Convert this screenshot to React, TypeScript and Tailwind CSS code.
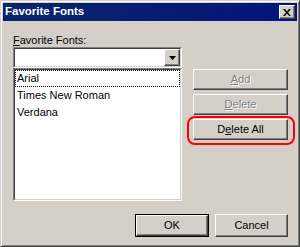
import React from 'react';

const font = { fontFamily: '"Liberation Sans", Arial, sans-serif' };

function Btn({
  children,
  disabled,
  className = '',
}: {
  children: React.ReactNode;
  disabled?: boolean;
  className?: string;
}) {
  return (
    <div
      className={`flex items-center justify-center border border-t-white border-l-white border-r-[#404040] border-b-[#404040] bg-[#d4d0c8] text-[11px] shadow-[inset_-1px_-1px_0_#808080] ${
        disabled ? 'text-[#808080] [text-shadow:1px_1px_0_#fff]' : 'text-black'
      } ${className}`}
    >
      {children}
    </div>
  );
}

function Sunken({ className = '', children }: { className?: string; children?: React.ReactNode }) {
  return (
    <div className={`border border-t-[#808080] border-l-[#808080] border-r-white border-b-white ${className}`}>
      <div className="h-full border border-t-[#404040] border-l-[#404040] border-r-[#d4d0c8] border-b-[#d4d0c8] bg-white">
        {children}
      </div>
    </div>
  );
}

export default function App() {
  const fonts = ['Arial', 'Times New Roman', 'Verdana'];

  return (
    <div
      className="w-[300px] h-[247px] bg-[#d4d0c8] border border-t-[#d4d0c8] border-l-[#d4d0c8] border-r-[#404040] border-b-[#404040] shadow-[inset_1px_1px_0_#fff,inset_-1px_-1px_0_#808080] p-[2px] flex flex-col"
      style={font}
    >
      {/* title bar */}
      <div className="h-[18px] bg-gradient-to-r from-[#0a246a] to-[#04147c] flex items-center justify-between pl-[2px] pr-[2px]">
        <span className="text-white font-bold text-[11.5px] leading-none">Favorite Fonts</span>
        <Btn className="w-[16px] h-[14px]">
          <svg width="8" height="7" viewBox="0 0 8 7">
            <path d="M0 0h2l2 2.5L6 0h2L5 3.5 8 7H6L4 4.5 2 7H0l3-3.5z" fill="#000" />
          </svg>
        </Btn>
      </div>

      <div className="flex-1 flex flex-col pl-[10px] pr-[9px] pt-[12px]">
        <div className="flex gap-[11px]">
          <div className="w-[169px] flex flex-col">
            <div className="h-[14px] text-[11px] leading-[14px] text-black">
              <span className="underline">F</span>avorite Fonts:
            </div>
            <Sunken className="h-[21px]">
              <div className="h-full flex justify-end">
                <Btn className="w-[16px] h-full">
                  <svg width="7" height="4" viewBox="0 0 7 4">
                    <path d="M0 0h7L3.5 4z" fill="#000" />
                  </svg>
                </Btn>
              </div>
            </Sunken>
            <Sunken className="h-[133px]">
              <div className="flex flex-col">
                {fonts.map((f, i) => (
                  <div
                    key={f}
                    className={`h-[17px] flex items-center pl-[1px] text-[11px] text-black border ${
                      i === 0 ? 'border-dotted border-black' : 'border-transparent'
                    }`}
                  >
                    {f}
                  </div>
                ))}
              </div>
            </Sunken>
          </div>

          <div className="flex flex-col gap-[4px] pt-[36px]">
            <Btn disabled className="w-[95px] h-[21px]">
              <span>
                <span className="underline">A</span>dd
              </span>
            </Btn>
            <Btn disabled className="w-[95px] h-[21px]">
              <span>
                <span className="underline">D</span>elete
              </span>
            </Btn>
            <div className="relative">
              <Btn className="w-[95px] h-[21px]">
                <span>
                  D<span className="underline">e</span>lete All
                </span>
              </Btn>
              <div className="absolute -left-[6px] -right-[7px] -top-[3px] -bottom-[5px] border-2 border-[#ff0000] rounded-[8px]" />
            </div>
          </div>
        </div>

        <div className="flex justify-end gap-[6px] mt-[13px]">
          <div className="border border-black">
            <Btn className="w-[72px] h-[21px]">OK</Btn>
          </div>
          <Btn className="w-[73px] h-[23px]">Cancel</Btn>
        </div>
      </div>
    </div>
  );
}
